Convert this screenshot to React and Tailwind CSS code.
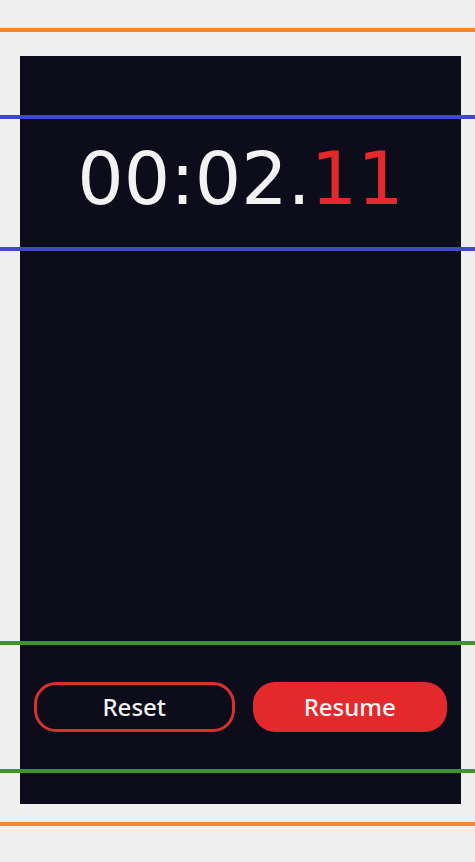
import React from 'react';

const GuideLine = ({ top, color }) => (
  <div className={`pointer-events-none absolute left-0 right-0 h-[4px] ${top} ${color}`} />
);

const Stopwatch = () => {
  return (
    <div className="ml-5 flex h-[748px] w-[441px] flex-col bg-[#0c0c1a] pt-[61px] pb-[33px]">
      {/* Temps */}
      <div className="flex h-[132px] items-center justify-center pb-[10px]">
        <p className="font-['DejaVu_Sans',sans-serif] text-[73px] leading-none text-[#f2f2f2]">
          00:02.<span className="text-[#e3292b]">11</span>
        </p>
      </div>

      <div className="flex-1" />

      {/* Contrôles */}
      <div className="flex h-[128px] items-center gap-[18px] px-3.5">
        <button className="flex h-[50px] flex-1 items-center justify-center rounded-[22px] border-[3px] border-[#d8302f] font-['Noto_Sans',sans-serif] text-[24px] font-medium text-[#f2f2f2]">
          Reset
        </button>
        <button className="flex h-[50px] flex-1 items-center justify-center rounded-[22px] bg-[#e3292b] font-['Noto_Sans',sans-serif] text-[24px] font-medium text-[#f5f5f5]">
          Resume
        </button>
      </div>
    </div>
  );
};

export default function App() {
  return (
    <div className="relative h-[862px] w-full overflow-hidden bg-[#efefef] pt-14">
      <Stopwatch />

      {/* lignes de repère */}
      <GuideLine top="top-[28px]" color="bg-[#f5862f]" />
      <GuideLine top="top-[115px]" color="bg-[#4049c8]" />
      <GuideLine top="top-[247px]" color="bg-[#4049c8]" />
      <GuideLine top="top-[641px]" color="bg-[#3f9423]" />
      <GuideLine top="top-[769px]" color="bg-[#3f9423]" />
      <GuideLine top="top-[822px]" color="bg-[#f5862f]" />
    </div>
  );
}
